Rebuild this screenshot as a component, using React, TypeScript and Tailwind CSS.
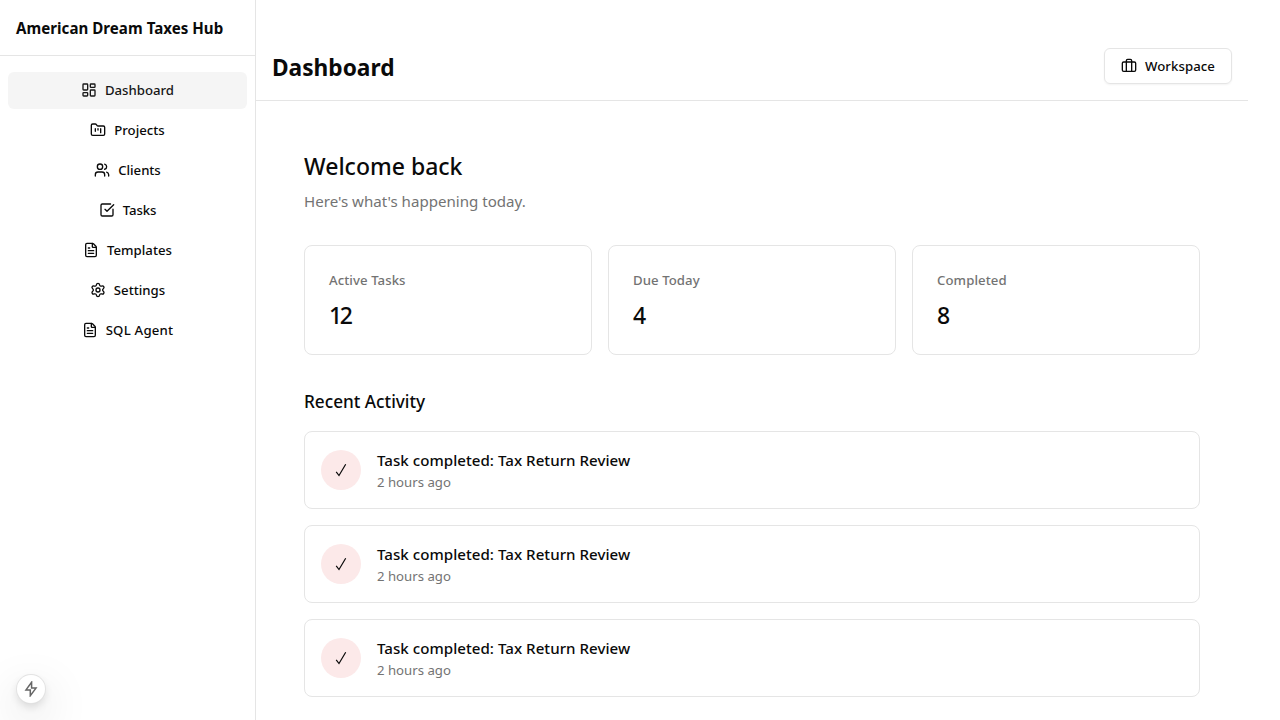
import {
  Briefcase,
  FileText,
  FolderKanban,
  LayoutDashboard,
  Settings,
  SquareCheckBig,
  Users,
  type LucideIcon,
} from "lucide-react";

type NavItem = { label: string; icon: LucideIcon; active?: boolean; tracking?: string };

const navItems: NavItem[] = [
  { label: "Dashboard", icon: LayoutDashboard, active: true },
  { label: "Projects", icon: FolderKanban },
  { label: "Clients", icon: Users, tracking: "tracking-[-0.05px]" },
  { label: "Tasks", icon: SquareCheckBig, tracking: "tracking-[-0.15px]" },
  { label: "Templates", icon: FileText },
  { label: "Settings", icon: Settings },
  { label: "SQL Agent", icon: FileText, tracking: "tracking-[0.22px]" },
];

const stats = [
  { label: "Active Tasks", value: 12 },
  { label: "Due Today", value: 4 },
  { label: "Completed", value: 8 },
];

const activities = [1, 2, 3].map((id) => ({
  id,
  title: "Task completed: Tax Return Review",
  time: "2 hours ago",
}));

function Sidebar() {
  return (
    <aside className="flex w-64 shrink-0 flex-col border-r border-[#e5e5e5]">
      <div className="flex h-14 shrink-0 items-center border-b border-[#e5e5e5] px-4">
        <h1 className="whitespace-nowrap text-[15.1px] leading-6 font-bold tracking-[0.03px]">American Dream Taxes Hub</h1>
      </div>
      <nav className="flex flex-col gap-[3px] px-2 py-4">
        {navItems.map(({ label, icon: Icon, active, tracking }) => (
          <a
            key={label}
            className={`flex h-[37px] items-center justify-center gap-2 rounded-md pb-px text-[13.2px] leading-5 font-medium ${active ? "bg-[#f5f5f5] text-[#171717]" : ""}`}
          >
            <Icon size={16} />
            <span className={tracking}>{label}</span>
          </a>
        ))}
      </nav>
    </aside>
  );
}

export default function App() {
  return (
    <div className="relative flex h-screen overflow-hidden bg-white font-['Noto_Sans',sans-serif] text-[#0a0a0a]">
      <Sidebar />
      <main className="flex min-w-0 flex-1 flex-col pt-8 pr-8">
        <header className="flex h-[69px] shrink-0 items-center justify-between border-b border-[#e5e5e5] px-4">
          <h2 className="pt-1 text-[22.7px] leading-8 font-bold">Dashboard</h2>
          <button className="flex h-9 items-center gap-2 rounded-md border border-[#e5e5e5] px-4 text-[13.2px] leading-5 font-medium tracking-[0.07px] shadow-xs">
            <Briefcase size={16} />
            <span>Workspace</span>
          </button>
        </header>
        <div className="px-12 pt-[49px]">
          <h3 className="text-[23px] leading-8 font-medium">Welcome back</h3>
          <p className="mt-[7px] text-[15.1px] leading-6 text-[#737373]">Here's what's happening today.</p>
          <div className="mt-8 grid grid-cols-3 gap-4">
            {stats.map((s) => (
              <div key={s.label} className="h-[110px] rounded-lg border border-[#e5e5e5] p-6">
                <p className="text-[13.2px] leading-5 font-medium tracking-[0.07px] text-[#737373]">{s.label}</p>
                <p className="mt-[9px] text-[23px] leading-8 font-medium tracking-[-2.5px]">{s.value}</p>
              </div>
            ))}
          </div>
          <h3 className="mt-[33px] text-[17.2px] leading-7 font-medium">Recent Activity</h3>
          <div className="mt-[15px] flex flex-col gap-4">
            {activities.map((a) => (
              <div key={a.id} className="flex h-[78px] items-center gap-4 rounded-lg border border-[#e5e5e5] px-4">
                <div className="flex size-10 items-center justify-center rounded-full bg-[#fce9e9]">
                  <svg width="12" height="14" viewBox="0 0 12 14" fill="none" stroke="#0a0a0a" strokeWidth="1.2">
                    <path d="M1.2 8.8 L4 12.5 L10.7 1.2" />
                  </svg>
                </div>
                <div>
                  <p className="text-[15.1px] leading-6 font-medium tracking-[0.03px]">{a.title}</p>
                  <p className="text-[13.2px] leading-5 text-[#737373]">{a.time}</p>
                </div>
              </div>
            ))}
          </div>
        </div>
      </main>
      <button className="absolute bottom-[17px] left-[17px] flex size-7 items-center justify-center rounded-full bg-white shadow-[0_0_0_1px_#e3e3e3,0_1px_1px_rgba(0,0,0,0.04),0_4px_8px_rgba(0,0,0,0.12),0_16px_48px_rgba(0,0,0,0.2)]">
        <svg width="16" height="16" viewBox="0 0 16 16" fill="none" stroke="#666666" strokeWidth="1.5">
          <path d="M8.6 1.3 L3 8.9 H7.3 V14.7 L13 7.1 H8.6 Z" />
        </svg>
      </button>
    </div>
  );
}
